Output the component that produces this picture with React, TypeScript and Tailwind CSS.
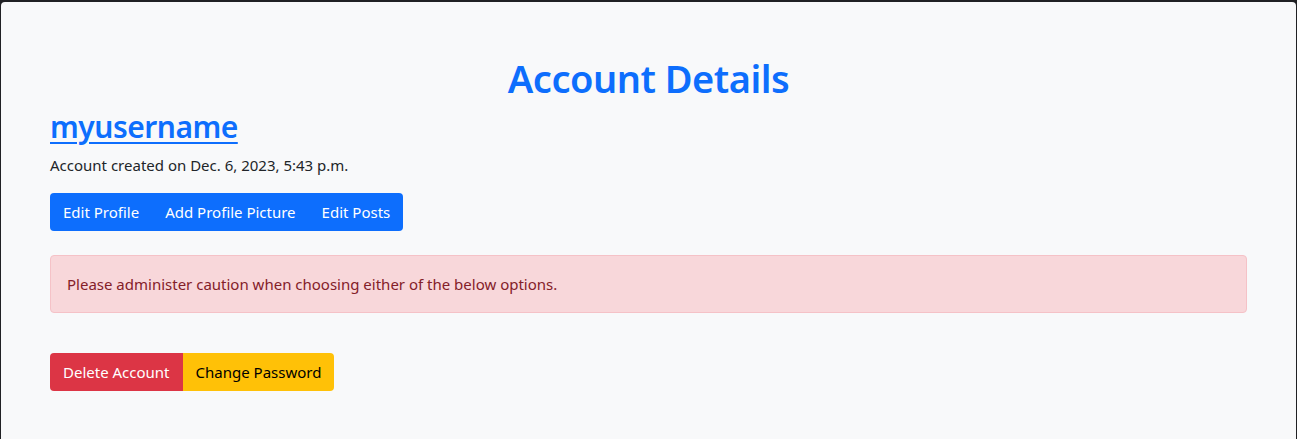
import React from "react";

export default function App() {
  return (
    <div className="w-[1297px] h-[439px] bg-[#202124] overflow-hidden" style={{ fontFamily: '"Noto Sans", sans-serif' }}>
      <div className="mt-[2px] ml-[1px] mr-[1px] h-[437px] bg-[#f8f9fa] rounded-tl-[4px] rounded-tr-[4px] px-[49px] pt-[52px]">
        <h1 className="text-center text-[38px] leading-[48px] font-semibold tracking-[-0.5px] text-[#0d6efd]">Account Details</h1>
        <h2 className="mt-[6px] text-[30px] leading-[38px] font-semibold tracking-[-0.5px] text-[#0d6efd]">
          <a href="#" className="underline decoration-[2px] underline-offset-[4px]">myusername</a>
        </h2>
        <p className="mt-[8px] text-[15px] leading-[22px] text-[#212529]">Account created on Dec. 6, 2023, 5:43 p.m.</p>
        <div className="mt-[17px] inline-flex rounded-[4px] overflow-hidden bg-[#0d6efd]">
          <button className="px-[13px] h-[38px] text-[15px] text-white">Edit Profile</button>
          <button className="px-[13px] h-[38px] text-[15px] text-white">Add Profile Picture</button>
          <button className="px-[13px] h-[38px] text-[15px] text-white">Edit Posts</button>
        </div>
        <div className="mt-[24px] h-[58px] flex items-center px-[16px] bg-[#f8d7da] border border-[#f5c2c7] rounded-[4px] text-[15px] text-[#842029]">
          Please administer caution when choosing either of the below options.
        </div>
        <div className="mt-[40px] flex">
          <div className="inline-flex rounded-[4px] overflow-hidden">
            <button className="px-[13px] h-[38px] text-[15px] text-white bg-[#dc3545]">Delete Account</button>
            <button className="px-[13px] h-[38px] text-[15px] text-black bg-[#ffc107]">Change Password</button>
          </div>
        </div>
      </div>
    </div>
  );
}
